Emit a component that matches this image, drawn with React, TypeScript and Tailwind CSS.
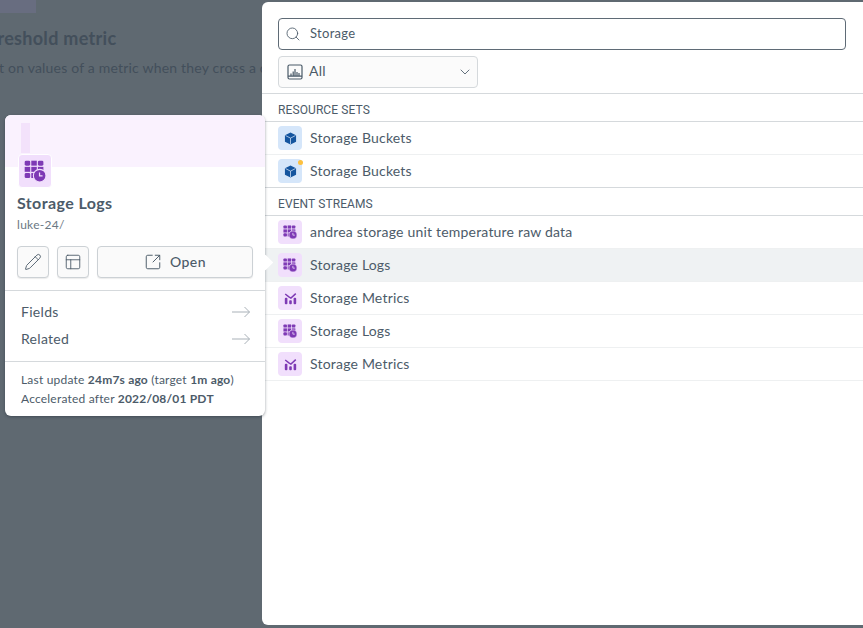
import { ChevronDown, Search, Pencil, PanelsTopLeft, SquareArrowOutUpRight } from "lucide-react";

const sans = "font-['Lato','Liberation_Sans',sans-serif]";

function GridClockIcon({ size = 14 }: { size?: number }) {
  return (
    <svg width={size} height={size} viewBox="0 0 16 16" fill="#7e3ab5">
      <rect x="0.5" y="0.5" width="4" height="3.6" rx="1" />
      <rect x="5.3" y="0.5" width="4" height="3.6" />
      <rect x="10.1" y="0.5" width="4" height="3.6" rx="1" />
      <rect x="0.5" y="5" width="4" height="3.6" />
      <rect x="5.3" y="5" width="4" height="3.6" />
      <rect x="10.1" y="5" width="4" height="3.6" />
      <rect x="0.5" y="9.5" width="4" height="3.6" rx="1" />
      <rect x="5.3" y="9.5" width="2.6" height="3.6" />
      <circle cx="11.4" cy="11.4" r="4.6" stroke="#f1dffc" strokeWidth="0.8" />
      <path d="M11.3 9v2.6h2.2" fill="none" stroke="#f1dffc" strokeWidth="0.9" />
    </svg>
  );
}

function MetricIcon() {
  return (
    <svg width="13" height="13" viewBox="0 0 16 16">
      <path d="M1.5 2.5 L6 6 L8.5 7.5 L14.5 2" fill="none" stroke="#7e3ab5" strokeWidth="1.8" />
      <rect x="1" y="7" width="3.2" height="8" rx="1.2" fill="#7e3ab5" />
      <rect x="6.4" y="10" width="3.2" height="5" rx="1.2" fill="#7e3ab5" />
      <rect x="11.8" y="7" width="3.2" height="8" rx="1.2" fill="#7e3ab5" />
    </svg>
  );
}

function CubeIcon() {
  return (
    <svg width="13" height="13" viewBox="0 0 14 14">
      <path d="M7 .5 13 3.6v6.8L7 13.5 1 10.4V3.6Z" fill="#14559f" />
      <path d="M1.6 3.8 7 6.6l5.4-2.8M7 6.6v6.4" fill="none" stroke="#d5e6fa" strokeWidth="0.8" />
    </svg>
  );
}

function ChartBoxIcon() {
  return (
    <svg width="16" height="16" viewBox="0 0 16 16" fill="none" stroke="#4a5a68" strokeWidth="1.2">
      <rect x="1" y="1" width="14" height="14" rx="1.5" />
      <path d="M1 12.2h14M4 12V9.5M6.2 12V7.5M8 12V5M10 12V8M12 12V9" />
    </svg>
  );
}

function ArrowIcon() {
  return (
    <svg width="20" height="12" viewBox="0 0 20 12" fill="none" stroke="#a9b1b8" strokeWidth="1">
      <path d="M1 6h17.5M13.5 1l5 5-5 5" />
    </svg>
  );
}

function Row({ icon, label, active, dot, last }: { icon: "cube" | "logs" | "metric"; label: string; active?: boolean; dot?: boolean; last?: boolean }) {
  return (
    <div className={`flex h-[33px] items-center gap-2 border-b pl-4 ${last ? "border-[#d5d9dc]" : "border-[#eef0f1]"} ${active ? "bg-[#eff2f3]" : ""}`}>
      <div className={`relative flex h-6 w-6 items-center justify-center rounded ${icon === "cube" ? "bg-[#d5e6fa]" : "bg-[#f1dffc]"}`}>
        {icon === "cube" && <CubeIcon />}
        {icon === "logs" && <GridClockIcon />}
        {icon === "metric" && <MetricIcon />}
        {dot && <span className="absolute right-[-1px] top-[1px] h-[5px] w-[5px] rounded-full bg-[#fdc03f]" />}
      </div>
      <span className="pb-[2px] text-[14px] tracking-[0.2px] text-[#4c5b69]">{label}</span>
    </div>
  );
}

function SectionLabel({ children }: { children: string }) {
  return (
    <div className="flex h-[28px] items-center border-b border-[#d5d9dc] pl-4 pt-[5px] font-['Roboto',sans-serif] text-[12px] tracking-[0.1px] text-[#4c5b69]">
      {children}
    </div>
  );
}

function Popover() {
  return (
    <div className="absolute left-[5px] top-[115px] h-[301px] w-[260px] rounded-md bg-white shadow-[0_1px_3px_rgba(30,40,50,0.45)]">
      <div className="h-[52px] rounded-t-md bg-[#faf2fe] pl-4 pt-2">
        <div className="h-[30px] w-[9px] bg-[#f3e2fb]" />
      </div>
      <div className="px-3">
        <div className="-mt-[13px] ml-[1px] flex h-[34px] w-[34px] items-center justify-center rounded border border-white bg-[#f1dffc]">
          <GridClockIcon size={22} />
        </div>
        <div className="mt-[5px] text-[16px] font-bold leading-[20px] tracking-[0.4px] text-[#4c5b69]">Storage Logs</div>
        <div className="mt-[4px] text-[12px] leading-[16px] tracking-[0.3px] text-[#6b7884]">luke-24/</div>
        <div className="mt-[13px] flex gap-2">
          <button className="flex h-8 w-8 items-center justify-center rounded border border-[#ccd1d5] bg-[#fafafa] text-[#4c5b69] shadow-[0_1px_1px_rgba(0,0,0,0.08)]">
            <Pencil size={18} strokeWidth={1.2} />
          </button>
          <button className="flex h-8 w-8 items-center justify-center rounded border border-[#ccd1d5] bg-[#fafafa] text-[#4c5b69] shadow-[0_1px_1px_rgba(0,0,0,0.08)]">
            <PanelsTopLeft size={18} strokeWidth={1.2} />
          </button>
          <button className="flex h-8 w-[156px] items-center justify-center gap-2 rounded border border-[#ccd1d5] bg-[#fafafa] text-[14px] font-medium tracking-[0.5px] text-[#4c5b69] shadow-[0_1px_1px_rgba(0,0,0,0.08)]">
            <SquareArrowOutUpRight size={18} strokeWidth={1.3} />
            <span className="pb-[1px]">Open</span>
          </button>
        </div>
      </div>
      <div className="mt-3 border-t border-[#d5d9dc] pb-[9px] pl-4 pr-[14px] pt-[7px]">
        <div className="flex h-[27px] items-center justify-between text-[14px] tracking-[0.3px] text-[#4c5b69]">
          Fields
          <ArrowIcon />
        </div>
        <div className="flex h-[27px] items-center justify-between text-[14px] tracking-[0.3px] text-[#4c5b69]">
          Related
          <ArrowIcon />
        </div>
      </div>
      <div className="border-t border-[#d5d9dc] px-4 pt-2 text-[12px] leading-[19px] tracking-[0.2px] text-[#4c5b69]">
        <div>
          Last update <b>24m7s ago</b> (target <b>1m ago</b>)
        </div>
        <div>
          Accelerated after <b>2022/08/01 PDT</b>
        </div>
      </div>
      <div className="absolute left-[255px] top-[142px] h-[11px] w-[11px] rotate-45 bg-white" />
    </div>
  );
}

export default function App() {
  return (
    <div className={`relative flex h-[628px] w-[863px] overflow-hidden bg-[#5f6971] ${sans}`}>
      <div className="w-[262px] shrink-0 overflow-hidden">
        <div className="h-[13px] w-[36px] bg-[#686d80]" />
        <div className="ml-[-24px] mt-[13px] whitespace-nowrap text-[18px] font-bold leading-[24px] tracking-[0.3px] text-[#434f5b]">
          Threshold metric
        </div>
        <div className="ml-[-27px] mt-[8px] whitespace-nowrap text-[14px] leading-[20px] tracking-[0.2px] text-[#434f5b]">
          Alert on values of a metric when they cross a c
        </div>
      </div>
      <div className="mb-[3px] mt-[2px] flex-1 rounded-l-md bg-white">
        <div className="px-4 pt-4">
          <div className="flex h-8 w-[568px] items-center gap-[9px] rounded border border-[#5f6b76] pl-[6px] pr-2">
            <Search size={16} strokeWidth={1.3} className="text-[#4c5b69]" />
            <span className="pb-[1px] text-[13px] tracking-[0.3px] text-[#4c5b69]">Storage</span>
          </div>
          <div className="mt-[6px] flex h-8 w-[200px] items-center gap-[6px] rounded border border-[#d5d9dc] bg-[#fbfbfb] pl-[8px] pr-[4px] text-[14px] tracking-[0.3px] text-[#4c5b69]">
            <ChartBoxIcon />
            <span className="pb-[4px]">All</span>
            <ChevronDown size={16} strokeWidth={1.3} className="ml-auto" />
          </div>
        </div>
        <div className="mt-[5px] border-t border-[#d5d9dc]">
          <SectionLabel>RESOURCE SETS</SectionLabel>
          <Row icon="cube" label="Storage Buckets" />
          <Row icon="cube" label="Storage Buckets" dot last />
        </div>
        <div>
          <SectionLabel>EVENT STREAMS</SectionLabel>
          <Row icon="logs" label="andrea storage unit temperature raw data" />
          <Row icon="logs" label="Storage Logs" active />
          <Row icon="metric" label="Storage Metrics" />
          <Row icon="logs" label="Storage Logs" />
          <Row icon="metric" label="Storage Metrics" />
        </div>
      </div>
      <Popover />
    </div>
  );
}
